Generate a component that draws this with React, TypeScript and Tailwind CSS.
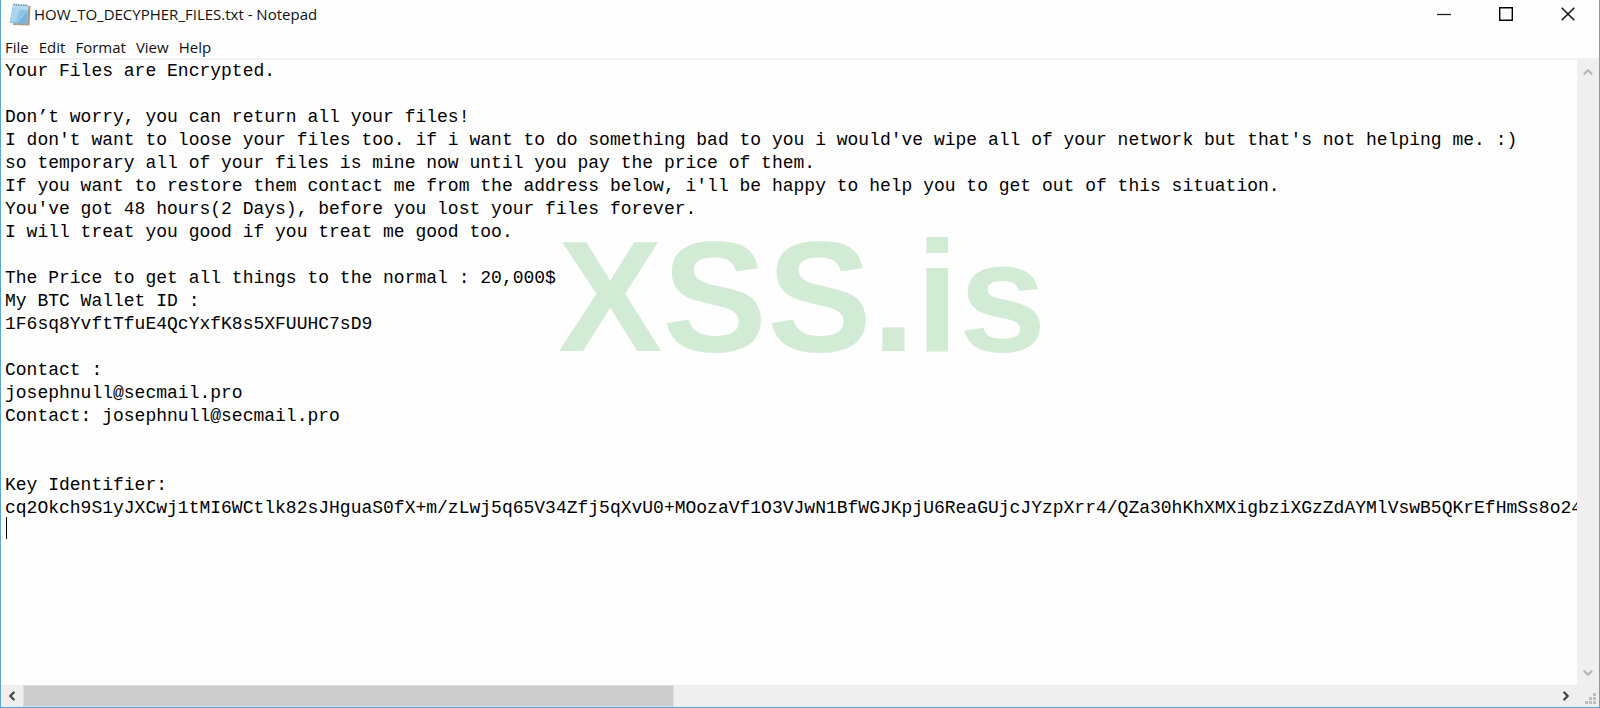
import { ChevronDown, ChevronLeft, ChevronRight, ChevronUp } from "lucide-react";

const menuItems = ["File", "Edit", "Format", "View", "Help"];

const note = `Your Files are Encrypted.

Don’t worry, you can return all your files!
I don't want to loose your files too. if i want to do something bad to you i would've wipe all of your network but that's not helping me. :)
so temporary all of your files is mine now until you pay the price of them.
If you want to restore them contact me from the address below, i'll be happy to help you to get out of this situation.
You've got 48 hours(2 Days), before you lost your files forever.
I will treat you good if you treat me good too.

The Price to get all things to the normal : 20,000$
My BTC Wallet ID :
1F6sq8YvftTfuE4QcYxfK8s5XFUUHC7sD9

Contact :
josephnull@secmail.pro
Contact: josephnull@secmail.pro


Key Identifier:
cq2Okch9S1yJXCwj1tMI6WCtlk82sJHguaS0fX+m/zLwj5q65V34Zfj5qXvU0+MOozaVf1O3VJwN1BfWGJKpjU6ReaGUjcJYzpXrr4/QZa30hKhXMXigbziXGzZdAYMlVswB5QKrEfHmSs8o24
`;

function NotepadIcon() {
    return (
        <svg width="22" height="24" viewBox="0 0 22 24" aria-hidden="true">
            <path d="M6 3 L21.5 4 L20.5 23.5 L4 23 Z" fill="#b39a80" />
            <path d="M4 2.5 L19.5 3.5 L18 21.5 L0.5 21 Z" fill="#8cc5e6" />
            <path d="M4 2.5 L19.5 3.5 L19 8 L3 7 Z" fill="#b5dcf0" />
            <path d="M3.4 6 L11 6.5 L7 19 L1 20 Z" fill="#a9d6ee" />
            <path d="M9 21 L18 10 L17.5 21.5 Z" fill="#74b4dc" />
            <path d="M4.5 2.5 L19 3.5" stroke="#6c8c9e" strokeWidth="1.6" strokeDasharray="1.4 1" />
        </svg>
    );
}

function TitleBar() {
    return (
        <header className="flex h-[30px] items-center justify-between pb-[2px]">
            <div className="flex items-center gap-[3px] pl-[8px]">
                <NotepadIcon />
                <h1 className="text-[15px] leading-5">HOW_TO_DECYPHER_FILES.txt - Notepad</h1>
            </div>
            <div className="flex h-full">
                <button aria-label="Minimize" className="flex w-[62px] items-center justify-center hover:bg-gray-200">
                    <svg width="14" height="14" viewBox="0 0 14 14">
                        <path d="M0 7.5 H14" stroke="#222" strokeWidth="1.3" />
                    </svg>
                </button>
                <button aria-label="Maximize" className="flex w-[62px] items-center justify-center hover:bg-gray-200">
                    <svg width="14" height="14" viewBox="0 0 14 14">
                        <path d="M0.7 0.7 H13.3 V13.3 H0.7 Z" fill="none" stroke="#000" strokeWidth="1.4" />
                    </svg>
                </button>
                <button aria-label="Close" className="flex w-[62px] items-center justify-center hover:bg-red-500">
                    <svg width="14" height="14" viewBox="0 0 14 14">
                        <path d="M0.7 0.7 L13.3 13.3 M13.3 0.7 L0.7 13.3" stroke="#111" strokeWidth="1.5" />
                    </svg>
                </button>
            </div>
        </header>
    );
}

function MenuBar() {
    return (
        <nav className="flex gap-[10px] border-b-2 border-[#f2f2f2] pt-[6px] pl-[4px]">
            {menuItems.map((item) => (
                <button key={item} className="text-[15px] leading-[22px] hover:bg-sky-100">
                    {item}
                </button>
            ))}
        </nav>
    );
}

export default function App() {
    return (
        <div className="flex h-screen flex-col border-x border-b border-[#58a6de] bg-[#fefefe] font-['Open_Sans','Noto_Sans',sans-serif] text-[#111]">
            <TitleBar />
            <MenuBar />

            {/* Editor with vertical scroll bar */}
            <main className="flex min-h-0 flex-1">
                <div className="relative flex min-w-0 flex-1">
                    <textarea
                        aria-label="Document text"
                        wrap="off"
                        spellCheck={false}
                        defaultValue={note}
                        className="flex-1 resize-none overflow-hidden whitespace-pre pl-[4px] font-['Liberation_Mono',monospace] text-[18px] leading-[23px] text-black outline-none"
                    />
                    {/* Text caret */}
                    <div className="absolute top-[457px] left-[5px] h-[22px] w-px bg-black" />
                    {/* Watermark */}
                    <div className="pointer-events-none absolute inset-x-0 top-[157px] pl-[26px] text-center font-['Liberation_Sans',Arial,sans-serif] text-[157px] leading-[160px] font-bold text-[#d2ebd5]">
                        XSS.is
                    </div>
                </div>
                <div className="flex w-[22px] flex-col items-center justify-between bg-[#efefef] text-[#b8b8b8]">
                    <button aria-label="Scroll up" className="flex h-[24px] w-full items-center justify-center">
                        <ChevronUp size={14} strokeWidth={4} />
                    </button>
                    <button aria-label="Scroll down" className="flex h-[24px] w-full items-center justify-center">
                        <ChevronDown size={14} strokeWidth={4} />
                    </button>
                </div>
            </main>

            {/* Horizontal scroll bar */}
            <footer className="flex h-[22px] bg-[#efefef] text-[#444]">
                <button aria-label="Scroll left" className="flex w-[22px] items-center justify-center">
                    <ChevronLeft size={14} strokeWidth={4} />
                </button>
                <div className="flex flex-1">
                    <div className="w-[42.5%] border border-[#dcdcdc] bg-[#cdcdcd]" />
                </div>
                <button aria-label="Scroll right" className="flex w-[22px] items-center justify-center">
                    <ChevronRight size={14} strokeWidth={4} />
                </button>
                <div className="flex w-[22px] items-end justify-end pr-[3px] pb-[2px]">
                    <svg width="12" height="12" viewBox="0 0 12 12" fill="#bdbdbd">
                        <path d="M9 0h3v3h-3z M5 4h3v3h-3z M9 4h3v3h-3z M1 8h3v3h-3z M5 8h3v3h-3z M9 8h3v3h-3z" />
                    </svg>
                </div>
            </footer>
        </div>
    );
}
